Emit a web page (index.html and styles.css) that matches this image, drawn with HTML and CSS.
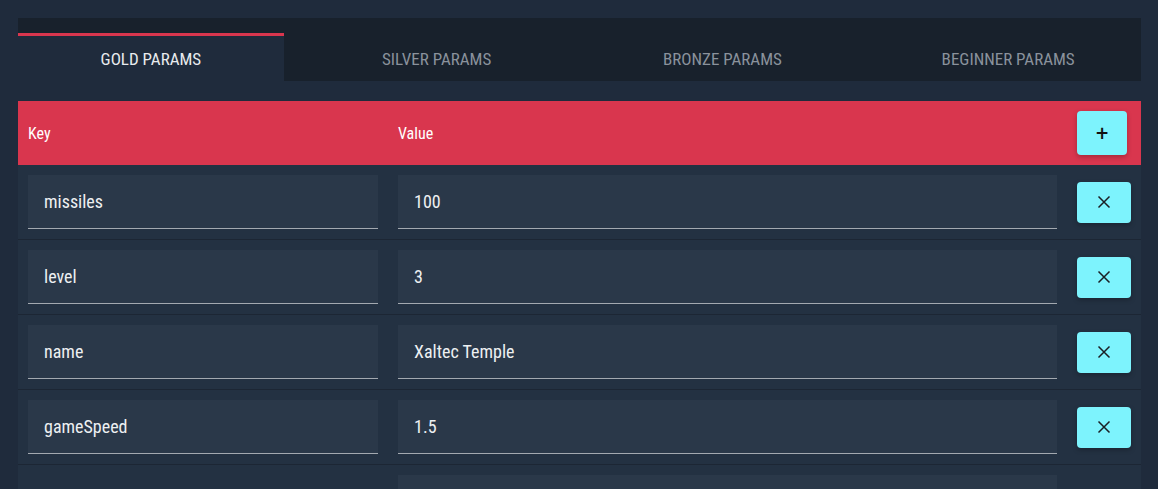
FILE: index.html
```html
<!DOCTYPE html>
<html>
<head>
<meta charset="utf-8">
<link rel="stylesheet" href="styles.css">
</head>
<body>
<div class="wrap">
  <div class="tabs">
    <div class="tab active">Gold Params</div>
    <div class="tab">Silver Params</div>
    <div class="tab">Bronze Params</div>
    <div class="tab">Beginner Params</div>
  </div>
  <div class="table">
    <div class="head">
      <div class="hcell">Key</div>
      <div class="hcell">Value</div>
      <div class="bcell"><button class="btn add">+</button></div>
    </div>
    <div class="row">
      <div class="field">missiles</div>
      <div class="field">100</div>
      <div class="bcell"><button class="btn del"><svg width="14" height="14" viewBox="0 0 14 14"><path d="M1.5 1.5L12.5 12.5M12.5 1.5L1.5 12.5" stroke="#1a1f24" stroke-width="1.5" fill="none"/></svg></button></div>
    </div>
    <div class="row">
      <div class="field">level</div>
      <div class="field">3</div>
      <div class="bcell"><button class="btn del"><svg width="14" height="14" viewBox="0 0 14 14"><path d="M1.5 1.5L12.5 12.5M12.5 1.5L1.5 12.5" stroke="#1a1f24" stroke-width="1.5" fill="none"/></svg></button></div>
    </div>
    <div class="row">
      <div class="field">name</div>
      <div class="field">Xaltec Temple</div>
      <div class="bcell"><button class="btn del"><svg width="14" height="14" viewBox="0 0 14 14"><path d="M1.5 1.5L12.5 12.5M12.5 1.5L1.5 12.5" stroke="#1a1f24" stroke-width="1.5" fill="none"/></svg></button></div>
    </div>
    <div class="row">
      <div class="field">gameSpeed</div>
      <div class="field">1.5</div>
      <div class="bcell"><button class="btn del"><svg width="14" height="14" viewBox="0 0 14 14"><path d="M1.5 1.5L12.5 12.5M12.5 1.5L1.5 12.5" stroke="#1a1f24" stroke-width="1.5" fill="none"/></svg></button></div>
    </div>
    <div class="row">
      <div class="empty"></div>
      <div class="field"></div>
      <div class="bcell"></div>
    </div>
  </div>
</div>
</body>
</html>
```
FILE: styles.css
```css
html, body {
  margin: 0;
  padding: 0;
  background: #1f2b3c;
  font-family: Roboto, "Liberation Sans", sans-serif;
  font-stretch: 80%;
  overflow: hidden;
}
.wrap {
  width: 1123px;
  padding: 18px 0 0 18px;
}
.tabs {
  display: flex;
  gap: 20px;
  background: #18212c;
  padding-top: 15px;
}
.tab {
  flex: 1;
  height: 45px;
  border-top: 3px solid transparent;
  display: flex;
  align-items: center;
  justify-content: center;
  text-transform: uppercase;
  font-size: 17px;
  color: #8a929c;
}
.tab.active {
  background: #1f2b3c;
  border-top-color: #d9364e;
  color: #e9ebee;
}
.table {
  margin-top: 20px;
  background: #233142;
}
.head, .row {
  display: grid;
  grid-template-columns: 350px 659px 54px;
  column-gap: 20px;
  padding: 0 10px;
  align-items: center;
}
.head {
  background: #d9364e;
  height: 64px;
}
.hcell {
  color: #ffffff;
  font-size: 16px;
}
.row {
  padding-top: 10px;
  padding-bottom: 10px;
  border-bottom: 1px solid #1c2634;
}
.field {
  height: 53px;
  background: #2a3849;
  border-bottom: 1px solid #a3a9b0;
  box-sizing: content-box;
  padding: 0 16px;
  display: flex;
  align-items: center;
  color: #eef0f2;
  font-size: 18px;
}
.empty {
  height: 54px;
}
.btn {
  border: none;
  border-radius: 4px;
  background: #7df3fd;
  box-shadow: 0 2px 5px rgba(0, 0, 0, 0.25);
  display: flex;
  align-items: center;
  justify-content: center;
  padding: 0;
  cursor: pointer;
}
.add {
  width: 50px;
  height: 44px;
  font-family: "DejaVu Sans", sans-serif;
  font-size: 17px;
  font-weight: bold;
  color: #111;
}
.del {
  width: 54px;
  height: 41px;
}
```
